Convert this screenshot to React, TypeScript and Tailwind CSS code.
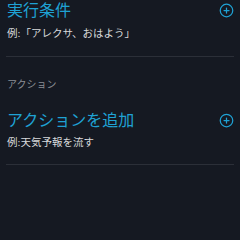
import { CirclePlus } from "lucide-react";

const jp = "font-['Noto_Sans_CJK_JP','Noto_Sans',sans-serif]";
const serif = "font-['Liberation_Serif','Noto_Sans_CJK_JP',serif]";

function SectionRow({ title, example, topGap, exampleGap }: { title: string; example: string; topGap: string; exampleGap: string }) {
  return (
    <div className={`pl-[7px] pr-[6px] ${topGap}`}>
      <div className="flex items-start justify-between">
        <span className={`${jp} text-[16px] leading-[18px] text-[#1fa2d4]`}>{title}</span>
        <CirclePlus size={15} strokeWidth={2} className="mt-[3px] text-[#1fa2d4]" />
      </div>
      <p className={`${serif} ${exampleGap} text-[10.5px] leading-[14px] text-[#d8d9dc]`}>{example}</p>
    </div>
  );
}

export default function App() {
  return (
    <div className="h-[240px] w-[240px] overflow-hidden bg-[#151922]">
      <SectionRow title="実行条件" example="例:「アレクサ、おはよう」" topGap="pt-0" exampleGap="mt-[9px]" />
      <div className="mx-[6px] mt-[15px] h-px bg-[#2b2f38]" />
      <p className={`${jp} mt-[20px] pl-[7px] text-[10px] leading-[14px] text-[#8b8e95]`}>アクション</p>
      <SectionRow title="アクションを追加" example="例:天気予報を流す" topGap="pt-[19px]" exampleGap="mt-[8px]" />
      <div className="mx-[6px] mt-[14px] h-px bg-[#2b2f38]" />
    </div>
  );
}
